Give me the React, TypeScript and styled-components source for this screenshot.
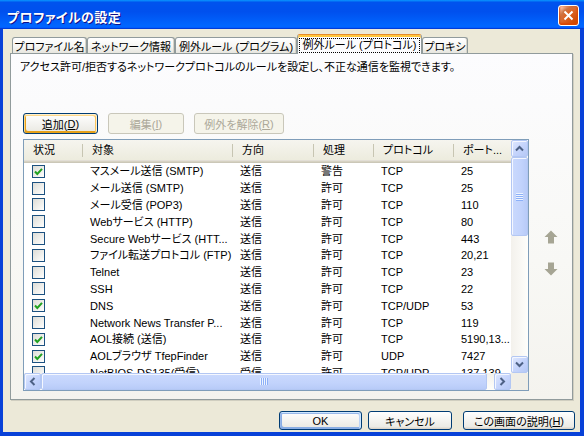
import React from "react";
import styled, { createGlobalStyle, css } from "styled-components";

const GlobalStyle = createGlobalStyle`
  html, body { margin: 0; padding: 0; background: #ECE9D8; }
  body {
    font-family: "Liberation Sans", "Noto Sans CJK JP", sans-serif;
    font-size: 11px;
    font-feature-settings: "palt";
    color: #000;
  }
  * { box-sizing: border-box; }
`;

const Window = styled.div`
  width: 584px;
  height: 436px;
  display: flex;
  flex-direction: column;
  overflow: hidden;
`;

const TitleBar = styled.div`
  height: 29px;
  flex: none;
  display: flex;
  align-items: flex-start;
  justify-content: space-between;
  padding: 5px 5px 0 7px;
  background: linear-gradient(
    180deg,
    #0997ff 0%,
    #0053ee 8%,
    #0050ee 40%,
    #0066ff 88%,
    #0066ff 93%,
    #005bff 95%,
    #003dd7 96%,
    #003dd7 100%
  );
`;

const TitleText = styled.div`
  margin-top: 5px;
  line-height: 15px;
  font-size: 13px;
  font-weight: bold;
  color: #fff;
  text-shadow: 1px 1px #0f1089;
  letter-spacing: 0.4px;
`;

const CloseButton = styled.div`
  width: 21px;
  height: 21px;
  border: 1px solid #fff;
  border-radius: 3px;
  display: flex;
  align-items: center;
  justify-content: center;
  background: radial-gradient(
    circle at 90% 90%,
    #cc4600 0%,
    #dc6527 55%,
    #cd7546 70%,
    #ffccb2 90%,
    #fff 100%
  );
  box-shadow: inset 0 -1px 2px 1px #da4600;
`;

const Frame = styled.div`
  flex: 1;
  display: flex;
  flex-direction: column;
  border-left: 3px solid #0841d8;
  border-right: 4px solid #0841d8;
  border-bottom: 4px solid #0841d8;
  background: #ece9d8;
  padding: 5px 7px 2px 7px;
`;

const TabStrip = styled.div`
  height: 20px;
  flex: none;
  display: flex;
  align-items: flex-end;
  padding-left: 2px;
  margin-bottom: -1px;
  position: relative;
  z-index: 1;
`;

const Tab = styled.div<{ $w: number; $active?: boolean }>`
  width: ${(p) => p.$w}px;
  flex: none;
  display: flex;
  align-items: center;
  justify-content: center;
  white-space: nowrap;
  border: 1px solid #919b9c;
  border-bottom: none;
  border-radius: 3px 3px 0 0;
  ${(p) =>
    p.$active
      ? css`
          height: 20px;
          background: #fcfcfe;
          border-top-color: #e68b2c;
          box-shadow: inset 0 2px 0 #ffc73c;
          padding-top: 1px;
        `
      : css`
          height: 16px;
          margin-bottom: 1px;
          background: linear-gradient(180deg, #ffffff 0%, #f6f6f3 55%, #e7e6df 100%);
          box-shadow: inset -1px 0 0 #d8d5c9;
        `}
`;

const FocusLabel = styled.span`
  outline: 1px dotted #000;
  outline-offset: 0;
  padding: 0 2px;
  line-height: 13px;
  width: 119px;
  text-align: center;
  margin-top: 1px;
`;

const Panel = styled.div`
  height: 347px;
  flex: none;
  border: 1px solid #919b9c;
  background: linear-gradient(180deg, #fcfcfe 0%, #f8f8f5 60%, #f4f3ee 100%);
  display: flex;
  flex-direction: column;
  box-shadow: 1px 1px 0 #d0cec0;
`;

const Description = styled.div`
  margin-top: 7px;
  line-height: 13px;
  padding-left: 9px;
`;

const ButtonRow = styled.div`
  margin-top: 39px;
  padding-left: 12px;
  display: flex;
  gap: 10px;
`;

const XPButton = styled.div<{ $w: number; $h: number; $kind?: "focus" | "default" | "disabled" }>`
  width: ${(p) => p.$w}px;
  height: ${(p) => p.$h}px;
  flex: none;
  display: flex;
  align-items: center;
  justify-content: center;
  white-space: nowrap;
  border-radius: 3px;
  border: 1px solid #003c74;
  background: linear-gradient(180deg, #ffffff, #ecebe5 86%, #d8d0c4);
  ${(p) =>
    p.$kind === "focus" &&
    css`
      box-shadow: inset -1px 1px #fff0cf, inset 1px 2px #fdd889, inset -2px 2px #fbc761,
        inset 2px -2px #e5a01a;
    `}
  ${(p) =>
    p.$kind === "default" &&
    css`
      box-shadow: inset -1px 1px #cee7ff, inset 1px 2px #98b8ea, inset -2px 2px #bcd4f6,
        inset 1px -1px #89ade4, inset 2px -2px #89ade4;
    `}
  ${(p) =>
    p.$kind === "disabled" &&
    css`
      background: #f5f4ea;
      border-color: #c9c7ba;
      color: #aca899;
    `}
`;

const HelpButton = styled(XPButton)`
  margin-left: 5px;
`;

const Content = styled.div`
  margin-top: 5px;
  padding-left: 12px;
  display: flex;
`;

const ListView = styled.div`
  width: 506px;
  height: 252px;
  flex: none;
  border: 1px solid #7f9db9;
  background: #fff;
  display: grid;
  grid-template-columns: 487px 17px;
  grid-template-rows: 233px 17px;
`;

const Viewport = styled.div`
  overflow: hidden;
`;

const Header = styled.div`
  height: 23px;
  display: flex;
  background: linear-gradient(180deg, #f6f5ef 0%, #ebeadb 100%);
  box-shadow: inset 0 -1px #cbc7b8, inset 0 -2px #d6d2c2, inset 0 -3px #e2ded6;
`;

const HeaderCell = styled.div<{ $w: number }>`
  width: ${(p) => p.$w}px;
  flex: none;
  position: relative;
  padding: 1px 0 0 9px;
  line-height: 19px;
  white-space: nowrap;
  overflow: hidden;
  &:not(:last-child)::after {
    content: "";
    position: absolute;
    right: 0;
    top: 4px;
    bottom: 6px;
    width: 1px;
    background: #c7c5b2;
    box-shadow: 1px 0 0 #fff;
  }
`;

const Row = styled.div`
  height: 16.8px;
  display: flex;
  align-items: center;
`;

const Cell = styled.div<{ $w: number }>`
  width: ${(p) => p.$w}px;
  flex: none;
  padding-left: 7px;
  white-space: nowrap;
  overflow: hidden;
  line-height: 16px;
  display: flex;
  align-items: center;
`;

const Check = styled.span`
  width: 13px;
  height: 13px;
  margin-left: 1px;
  border: 1px solid #1c5180;
  background: linear-gradient(135deg, #dcdcd7 0%, #f4f4f1 70%, #ffffff 100%);
  display: inline-flex;
  align-items: center;
  justify-content: center;
`;

const scrollPiece = css`
  border: 1px solid #b3c7f3;
  border-radius: 2px;
  box-shadow: inset 1px 1px 0 #f4f7ff;
`;

const VScroll = styled.div`
  display: flex;
  flex-direction: column;
  background: linear-gradient(90deg, #f3f1ec 0%, #fefefb 100%);
`;

const HScroll = styled.div`
  display: flex;
  background: linear-gradient(180deg, #f3f1ec 0%, #fefefb 100%);
`;

const ScrollBtn = styled.div`
  width: 17px;
  height: 17px;
  flex: none;
  display: flex;
  align-items: center;
  justify-content: center;
  ${scrollPiece};
  background: linear-gradient(135deg, #e0e8fe 0%, #c6d5fc 50%, #b5c8f6 100%);
`;

const Thumb = styled.div<{ $vertical?: boolean }>`
  flex: none;
  display: flex;
  align-items: center;
  justify-content: center;
  ${scrollPiece};
  ${(p) =>
    p.$vertical
      ? css`
          height: 79px;
          background: linear-gradient(90deg, #cad9fd 0%, #c2d3fc 60%, #b8cbf8 100%);
        `
      : css`
          width: 446px;
          background: linear-gradient(180deg, #cad9fd 0%, #c2d3fc 60%, #b8cbf8 100%);
        `}
`;

const Grip = styled.div<{ $vertical?: boolean }>`
  ${(p) =>
    p.$vertical
      ? css`
          width: 7px;
          height: 8px;
          background: repeating-linear-gradient(180deg, #eef4fe 0 1px, #8cb0f8 1px 2px);
        `
      : css`
          width: 8px;
          height: 7px;
          background: repeating-linear-gradient(90deg, #eef4fe 0 1px, #8cb0f8 1px 2px);
        `}
`;

const Spacer = styled.div`
  flex: 1;
`;

const Corner = styled.div`
  background: #f0eee6;
`;

const SideColumn = styled.div`
  flex: 1;
  display: flex;
  flex-direction: column;
  align-items: center;
  padding-top: 91px;
  gap: 18px;
`;

const Footer = styled.div`
  margin-top: 11px;
  margin-right: -2px;
  display: flex;
  justify-content: flex-end;
  gap: 6px;
`;

const COLS = [59, 150, 81, 60, 80, 57];
const HEAD = ["状況", "対象", "方向", "処理", "プロトコル", "ポート..."];

type RowData = { on: boolean; name: string; dir: string; act: string; proto: string; port: string };

const ROWS: RowData[] = [
  { on: true, name: "マスメール送信 (SMTP)", dir: "送信", act: "警告", proto: "TCP", port: "25" },
  { on: false, name: "メール送信 (SMTP)", dir: "送信", act: "許可", proto: "TCP", port: "25" },
  { on: false, name: "メール受信 (POP3)", dir: "送信", act: "許可", proto: "TCP", port: "110" },
  { on: false, name: "Webサービス (HTTP)", dir: "送信", act: "許可", proto: "TCP", port: "80" },
  { on: false, name: "Secure Webサービス (HTT...", dir: "送信", act: "許可", proto: "TCP", port: "443" },
  { on: false, name: "ファイル転送プロトコル (FTP)", dir: "送信", act: "許可", proto: "TCP", port: "20,21" },
  { on: false, name: "Telnet", dir: "送信", act: "許可", proto: "TCP", port: "23" },
  { on: false, name: "SSH", dir: "送信", act: "許可", proto: "TCP", port: "22" },
  { on: true, name: "DNS", dir: "送信", act: "許可", proto: "TCP/UDP", port: "53" },
  { on: false, name: "Network News Transfer P...", dir: "送信", act: "許可", proto: "TCP", port: "119" },
  { on: true, name: "AOL接続 (送信)", dir: "送信", act: "許可", proto: "TCP", port: "5190,13..." },
  { on: true, name: "AOLブラウザ TfepFinder", dir: "送信", act: "許可", proto: "UDP", port: "7427" },
  { on: false, name: "NetBIOS-DS135(受信)", dir: "受信", act: "許可", proto: "TCP/UDP", port: "137,139" },
];

const Chevron = ({ dir }: { dir: "up" | "down" | "left" | "right" }) => {
  const rot = { up: 0, right: 90, down: 180, left: 270 }[dir];
  return (
    <svg width="9" height="9" viewBox="0 0 9 9" style={{ transform: `rotate(${rot}deg)` }}>
      <polyline points="1,6.5 4.5,3 8,6.5" fill="none" stroke="#4d6185" strokeWidth="2" />
    </svg>
  );
};

const MoveArrow = ({ down }: { down?: boolean }) => (
  <svg width="14" height="14" viewBox="0 0 14 14" style={down ? { transform: "rotate(180deg)" } : undefined}>
    <polygon points="7,0.5 13.5,7 10,7 10,13.5 4,13.5 4,7 0.5,7" fill="#a6a594" />
  </svg>
);

const CheckMark = () => (
  <svg width="9" height="9" viewBox="0 0 9 9">
    <polyline points="1,4.5 3.3,7 8,1.8" fill="none" stroke="#21a121" strokeWidth="2" />
  </svg>
);

export default function App() {
  return (
    <>
      <GlobalStyle />
      <Window>
        <TitleBar>
          <TitleText>プロファイルの設定</TitleText>
          <CloseButton>
            <svg width="11" height="11" viewBox="0 0 11 11">
              <path d="M1.5 1.5 L9.5 9.5 M9.5 1.5 L1.5 9.5" stroke="#fff" strokeWidth="2" />
            </svg>
          </CloseButton>
        </TitleBar>
        <Frame>
          <TabStrip>
            <Tab $w={75}>プロファイル名</Tab>
            <Tab $w={88}>ネットワーク情報</Tab>
            <Tab $w={122}>例外ルール (プログラム)</Tab>
            <Tab $w={125} $active>
              <FocusLabel>例外ルール (プロトコル)</FocusLabel>
            </Tab>
            <Tab $w={46}>プロキシ</Tab>
          </TabStrip>
          <Panel>
            <Description>
              アクセス許可/拒否するネットワークプロトコルのルールを設定し、不正な通信を監視できます。
            </Description>
            <ButtonRow>
              <XPButton $w={75} $h={21} $kind="focus">
                追加(<u>D</u>)
              </XPButton>
              <XPButton $w={76} $h={21} $kind="disabled">
                編集(<u>I</u>)
              </XPButton>
              <XPButton $w={90} $h={21} $kind="disabled">
                例外を解除(<u>R</u>)
              </XPButton>
            </ButtonRow>
            <Content>
              <ListView>
                <Viewport>
                  <Header>
                    {HEAD.map((h, i) => (
                      <HeaderCell key={h} $w={COLS[i]}>
                        {h}
                      </HeaderCell>
                    ))}
                  </Header>
                  {ROWS.map((r) => (
                    <Row key={r.name}>
                      <Cell $w={COLS[0]}>
                        <Check>{r.on && <CheckMark />}</Check>
                      </Cell>
                      <Cell $w={COLS[1]}>{r.name}</Cell>
                      <Cell $w={COLS[2]}>{r.dir}</Cell>
                      <Cell $w={COLS[3]}>{r.act}</Cell>
                      <Cell $w={COLS[4]}>{r.proto}</Cell>
                      <Cell $w={COLS[5]}>{r.port}</Cell>
                    </Row>
                  ))}
                </Viewport>
                <VScroll>
                  <ScrollBtn>
                    <Chevron dir="up" />
                  </ScrollBtn>
                  <Thumb $vertical>
                    <Grip $vertical />
                  </Thumb>
                  <Spacer />
                  <ScrollBtn>
                    <Chevron dir="down" />
                  </ScrollBtn>
                </VScroll>
                <HScroll>
                  <ScrollBtn>
                    <Chevron dir="left" />
                  </ScrollBtn>
                  <Thumb>
                    <Grip />
                  </Thumb>
                  <Spacer />
                  <ScrollBtn>
                    <Chevron dir="right" />
                  </ScrollBtn>
                </HScroll>
                <Corner />
              </ListView>
              <SideColumn>
                <MoveArrow />
                <MoveArrow down />
              </SideColumn>
            </Content>
          </Panel>
          <Footer>
            <XPButton $w={83} $h={19} $kind="default">
              OK
            </XPButton>
            <XPButton $w={84} $h={19}>
              キャンセル
            </XPButton>
            <HelpButton $w={112} $h={19}>
              この画面の説明(<u>H</u>)
            </HelpButton>
          </Footer>
        </Frame>
      </Window>
    </>
  );
}
